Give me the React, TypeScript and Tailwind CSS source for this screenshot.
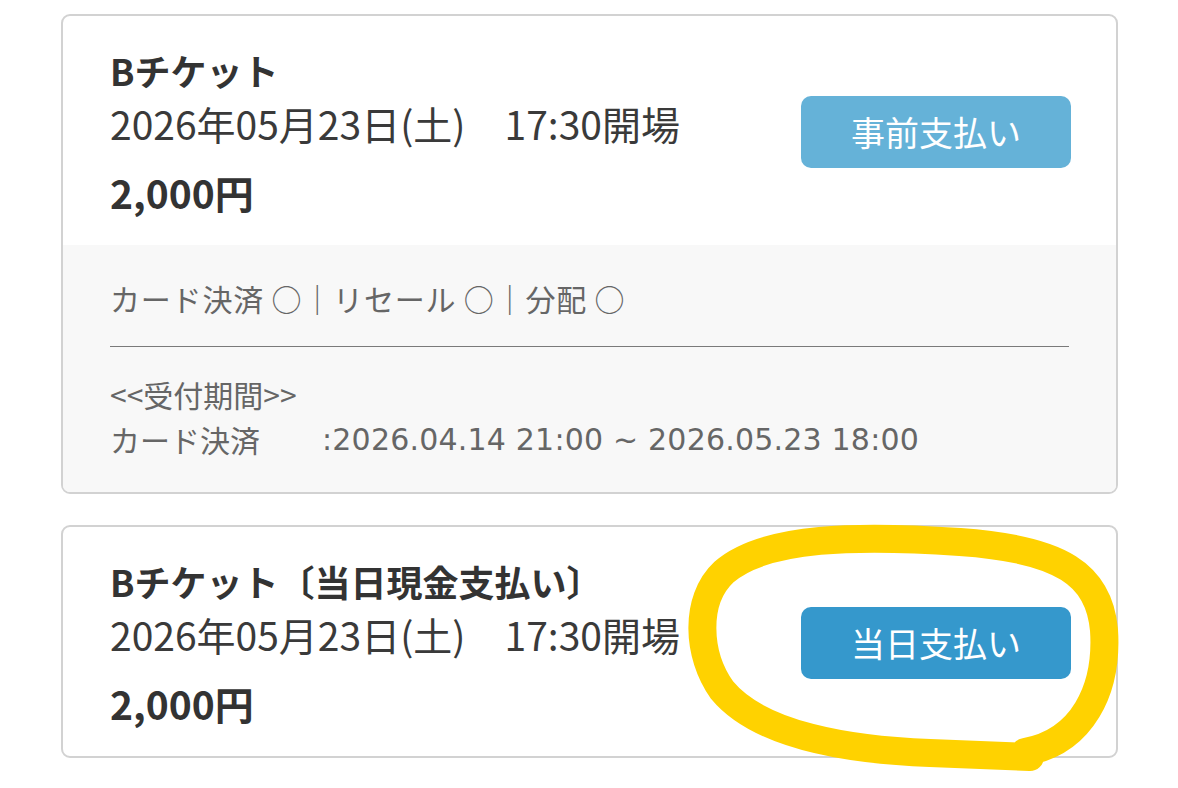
import React from "react";

const font = {
  fontFamily: '"Noto Sans CJK JP", "Noto Sans", sans-serif',
};

type Ticket = {
  title: string;
  date: string;
  price: string;
  button: string;
  buttonClass: string;
  details?: boolean;
};

const tickets: Ticket[] = [
  {
    title: "Bチケット",
    date: "2026年05月23日(土)　17:30開場",
    price: "2,000円",
    button: "事前支払い",
    buttonClass: "bg-[#65b2d8]",
    details: true,
  },
  {
    title: "Bチケット〔当日現金支払い〕",
    date: "2026年05月23日(土)　17:30開場",
    price: "2,000円",
    button: "当日支払い",
    buttonClass: "bg-[#3598cc]",
  },
];

const TicketCard: React.FC<{ t: Ticket }> = ({ t }) => (
  <div className="w-[1057px] rounded-[9px] border-2 border-[#d2d2d2] bg-white overflow-hidden">
    <div className="flex items-center justify-between pl-[47px] pr-[45px] pt-[28px] pb-[26px]">
      <div className="text-[#333]">
        <div className="text-[36px] leading-[53px] font-bold">{t.title}</div>
        <div className="text-[39px] leading-[53px] font-normal text-[#3a3a3a]">{t.date}</div>
        <div className="mt-4 text-[39px] leading-[53px] font-bold">{t.price}</div>
      </div>
      <button
        className={`w-[270px] h-[72px] rounded-[10px] text-white text-[34px] ${t.buttonClass}`}
      >
        {t.button}
      </button>
    </div>
    {t.details && (
      <div className="bg-[#f8f8f8] px-[47px] pt-[31px] pb-[30px] text-[30px] leading-[45px] text-[#666]">
        <div className="tracking-[0.8px]">カード決済 ○｜リセール ○｜分配 ○</div>
        <div className="mt-[25px] mb-[25px] h-px bg-[#7a7a7a]" />
        <div>&lt;&lt;受付期間&gt;&gt;</div>
        <div className="flex">
          <span className="w-[212px]">カード決済</span>
          <span className="font-['DejaVu_Sans'] tracking-[0.2px]">:2026.04.14 21:00 ~ 2026.05.23 18:00</span>
        </div>
      </div>
    )}
  </div>
);

export default function App() {
  return (
    <div className="relative w-[1178px] h-[788px] bg-white overflow-hidden" style={font}>
      <div className="flex flex-col gap-[31px] pl-[61px] pt-[14px]">
        {tickets.map((t) => (
          <TicketCard key={t.button} t={t} />
        ))}
      </div>
      {/* hand-drawn highlight */}
      <svg
        className="absolute inset-0 pointer-events-none"
        width="1178"
        height="788"
        viewBox="0 0 1178 788"
      >
        <path
          d="M 1025 752 C 1082 742 1108 690 1104 630 C 1099 575 1062 549 960 542 C 860 535 765 536 724 572 C 694 600 697 655 722 690 C 760 736 850 750 930 753 L 1030 757"
          fill="none"
          stroke="#ffd200"
          strokeWidth="28"
          strokeLinecap="round"
          strokeLinejoin="round"
        />
      </svg>
    </div>
  );
}
